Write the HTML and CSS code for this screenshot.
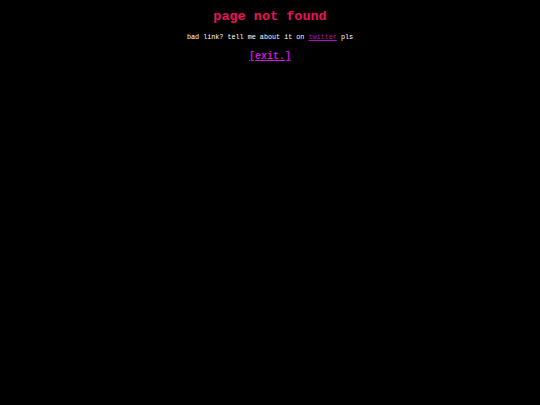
FILE: index.html
```html
<!DOCTYPE html>
<html>
<head>
<meta charset="utf-8">
<link rel="stylesheet" href="styles.css">
</head>
<body>
<main class="page">
  <h1 class="title">page not found</h1>
  <p class="msg">bad link? tell me about it on <a class="tw" href="#">twitter</a> pls</p>
  <a class="exit" href="#">[exit.]</a>
</main>
</body>
</html>
```
FILE: styles.css
```css
html, body {
  margin: 0;
  padding: 0;
  background: #000;
}
body {
  font-family: "Liberation Mono", "Courier New", monospace;
  color: #fff;
}
.page {
  display: flex;
  flex-direction: column;
  align-items: center;
  padding-top: 9px;
}
.title {
  margin: 0;
  font-size: 13.5px;
  line-height: 16px;
  font-weight: bold;
  color: #e8145c;
}
.msg {
  margin: 8px 0 0;
  font-size: 6.75px;
  line-height: 8px;
  color: #fff;
}
.tw {
  color: #b010c0;
}
.exit {
  margin-top: 10px;
  font-size: 10px;
  line-height: 12px;
  font-weight: bold;
  color: #c818d8;
}
```
